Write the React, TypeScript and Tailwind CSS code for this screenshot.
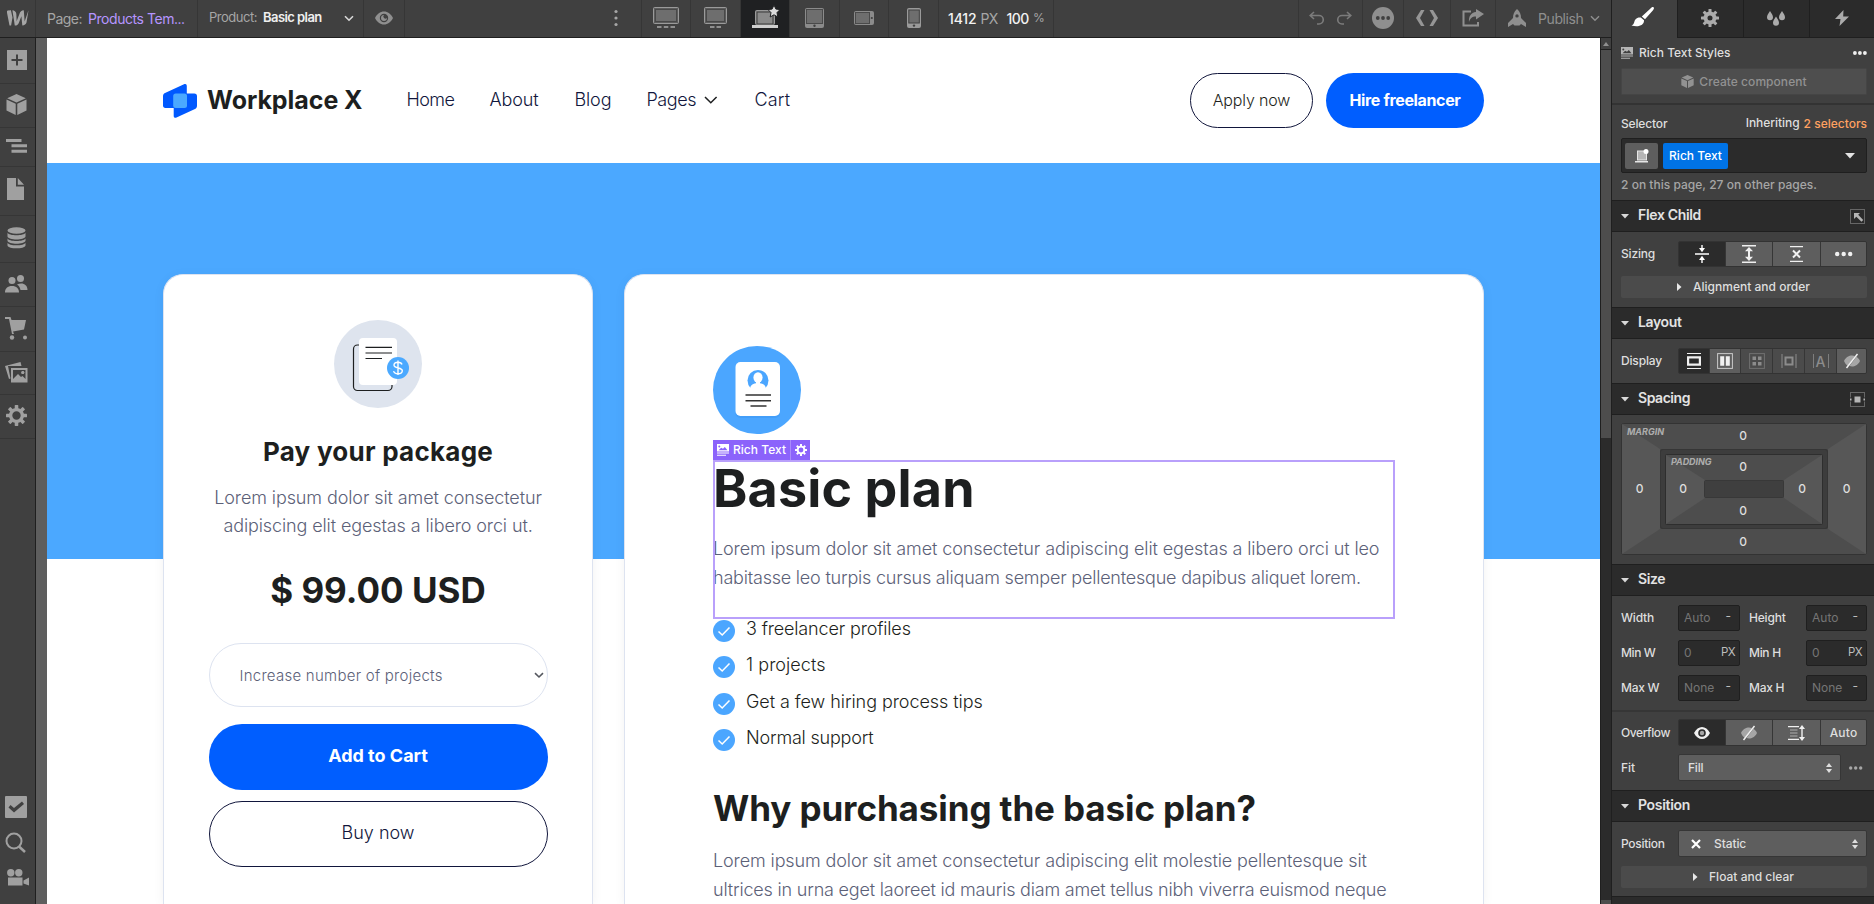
import type { ReactNode } from "react";

type IcProps = { w: number; h: number; className?: string; children: ReactNode };
const Ic = ({ w, h, className = "", children }: IcProps) => (
  <svg width={w} height={h} viewBox={`0 0 ${w} ${h}`} className={`shrink-0 ${className}`} fill="currentColor">
    {children}
  </svg>
);

/* ---------- shared glyphs ---------- */

const Gear = ({ size, className = "", hole = 3.6 }: { size: number; className?: string; hole?: number }) => (
  <svg width={size} height={size} viewBox="-10 -10 20 20" className={`shrink-0 ${className}`}>
    {[0, 45, 90, 135, 180, 225, 270, 315].map((a) => (
      <rect key={a} x={-1.7} y={-10} width={3.4} height={5} rx={0.6} fill="currentColor" transform={`rotate(${a})`} />
    ))}
    <circle r={(hole + 7.2) / 2} fill="none" stroke="currentColor" strokeWidth={7.2 - hole} />
  </svg>
);

const Cube = ({ size, className = "" }: { size: number; className?: string }) => (
  <svg width={size} height={size} viewBox="0 0 20 21" className={`shrink-0 ${className}`} fill="currentColor">
    <path d="M10 0l9.3 4.2L10 8.4.7 4.2zM0 5.600l9.200 4.200V21L0 16.600zM20 5.600l-9.200 4.200V21l9.200-4.400z" />
  </svg>
);

const Dots = ({ r = 2, gap = 6, className = "" }: { r?: number; gap?: number; className?: string }) => (
  <Ic w={gap * 2 + r * 2 + 2} h={6} className={className}>
    <circle cx={r + 1} cy={3} r={r} />
    <circle cx={r + 1 + gap} cy={3} r={r} />
    <circle cx={r + 1 + gap * 2} cy={3} r={r} />
  </Ic>
);

const RichTextGlyph = ({ className = "" }: { className?: string }) => (
  <Ic w={12} h={12} className={className}>
    <path fillRule="evenodd" d="M0 0h12v7.5H0zM1.500 6.200h9L7.800 3 6 4.800 4.200 3.800zM2.300 1.400a1 1 0 100 2 1 1 0 000-2z" />
    <path d="M0 8.500h12v1H0zM0 10.700h9v1H0z" />
  </Ic>
);

const EyeOff = () => (
  <Ic w={18} h={16}>
    <path d="M1 8c2-4 5-5.500 8-5.500 1 0 2 .2 3 .6L5 13C3.200 12 2 10.200 1 8zM13.500 3.800C15.200 4.900 16.300 6.400 17 8c-2 4-5 5.500-8 5.500-.9 0-1.700-.1-2.500-.4z" fill="#a6a6a6" />
    <path d="M3.500 15L14.500 1" stroke="#f0f0f0" strokeWidth={1.500} />
  </Ic>
);

/* ---------- top bar ---------- */

const cell = "flex h-full shrink-0 items-center justify-center border-r border-[#363636] pb-px";

const Screen = ({ w, dashes }: { w: number; dashes: number[] }) => (
  <Ic w={w} h={22}>
    <rect x={0.500} y={0.500} width={w - 1} height={16} rx={1} fill="#5c5c5c" stroke="#9a9a9a" />
    <rect x={2.500} y={2.500} width={w - 5} height={12} fill="#6e6e6e" stroke="#484848" />
    {dashes.map((x) => (
      <rect key={x} x={x} y={19} width={4.500} height={2} fill="#8f8f8f" />
    ))}
  </Ic>
);

function TopBar() {
  return (
    <div className="flex h-[38px] w-[1612px] shrink-0 items-stretch border-b border-[#1f1f1f] text-[14px] text-[#a6a6a6]">
      <div className={`${cell} w-9`}>
        <Ic w={22} h={16}>
          <path
            d="M22 .3s-3.500 10.300-3.800 11.200C18.100 10.500 17.300.3 17.300.3c-2.300 0-3.600 1.600-4.200 3.300 0 0-2.700 7.200-2.900 7.800 0-.6-.4-7.700-.4-7.700C9.600 1.500 7.600.3 5.900.3 5.900.3 8 13 8.300 15.600c2.300 0 3.600-1.500 4.200-3.200l2.400-6.100.9 9.300c2.300 0 3.600-1.400 4.200-3zM4.600 15.600L6 7.500 4.400.3C2.700.3.300 1.200 0 .3l3 15.300z"
            transform="translate(-.5 0)"
          />
        </Ic>
      </div>
      <div className={`${cell} w-[162px] !justify-start pl-[11px]`}>
        <span className="tracking-[-0.52px]">Page:</span>
        <span className="ml-[6px] tracking-[-0.45px] text-[#b695ff]">Products Tem...</span>
      </div>
      <div className={`${cell} w-[166px] !justify-start pl-[11px] text-[13px]`}>
        <span className="tracking-[-0.48px]">Product:</span>
        <span className="ml-[6px] font-semibold tracking-[-0.57px] text-[#efefef]">Basic plan</span>
        <Ic w={10} h={7} className="ml-[22px] text-[#d9d9d9]">
          <path d="M1 1.200l4 4 4-4" fill="none" stroke="currentColor" strokeWidth={1.600} />
        </Ic>
      </div>
      <div className={`${cell} w-[41px]`}>
        <Ic w={18} h={14} className="text-[#8f8f8f]">
          <path fillRule="evenodd" d="M0 7c2-4 5.200-6.500 9-6.500S16 3 18 7c-2 4-5.200 6.500-9 6.500S2 11 0 7zm9-4.200a4.200 4.200 0 104.200 4.200A4.200 4.200 0 009 2.800z" />
          <path d="M9 4a3 3 0 103 3 1.800 1.800 0 01-3-3z" fill="#8f8f8f" />
        </Ic>
      </div>
      <div className={`${cell} w-[237px] !justify-end pr-[23px]`}>
        <Ic w={4} h={18}>
          <circle cx={2} cy={2.500} r={1.600} />
          <circle cx={2} cy={9} r={1.600} />
          <circle cx={2} cy={15.500} r={1.600} />
        </Ic>
      </div>
      <div className={`${cell} w-[49px] pr-px`}>
        <Screen w={26} dashes={[4, 10.800, 17.500]} />
      </div>
      <div className={`${cell} w-[50px]`}>
        <Screen w={23} dashes={[6, 12.500]} />
      </div>
      <div className={`${cell} w-[49px] bg-[#1f2022]`}>
        <Ic w={28} h={24} className="mb-[3px] ml-[2px]">
          <rect x={3.500} y={5.500} width={19} height={14} rx={1} fill="#8b8b8b" stroke="#9a9a9a" />
          <rect x={5} y={7} width={16} height={12} fill="#8a8a8a" stroke="#3a3a3a" />
          <rect x={0} y={20} width={26} height={3} fill="#cfcfcf" />
          <path d="M22 0l1.900 4.100 4.100.5-3 3 .8 4.400-3.800-2.200-3.800 2.200.8-4.400-3-3 4.100-.5z" fill="#dcdcdc" stroke="#1f2022" strokeWidth={1} />
        </Ic>
      </div>
      <div className={`${cell} w-[50px]`}>
        <Ic w={19} h={20}>
          <rect width={19} height={20} rx={2} fill="#8b8b8b" />
          <rect x={1.500} y={1.500} width={16} height={14} fill="#6e6e6e" stroke="#4a4a4a" />
          <circle cx={9.500} cy={17.800} r={1.200} fill="#404040" />
        </Ic>
      </div>
      <div className={`${cell} w-[49px]`}>
        <Ic w={20} h={14}>
          <rect width={20} height={14} rx={2} fill="#8b8b8b" />
          <rect x={1.500} y={1.500} width={14} height={11} fill="#6e6e6e" stroke="#4a4a4a" />
          <circle cx={17.800} cy={7} r={1.100} fill="#404040" />
        </Ic>
      </div>
      <div className={`${cell} w-[50px]`}>
        <Ic w={14} h={20}>
          <rect width={14} height={20} rx={2} fill="#9a9a9a" />
          <rect x={1.800} y={2} width={10.500} height={13} fill="#6e6e6e" stroke="#404040" />
          <circle cx={7} cy={17.600} r={1.200} fill="#404040" />
        </Ic>
      </div>
      <div className={`${cell} w-[115px] !justify-start pl-[9px]`}>
        <span className="font-medium tracking-[-0.14px] text-[#f2f2f2]">1412</span>
        <span className="ml-[4px] tracking-[-0.8px]">PX</span>
        <span className="ml-[9px] font-medium tracking-[-0.46px] text-[#f2f2f2]">100</span>
        <span className="ml-[4px] text-[12px]">%</span>
      </div>
      <div className={`${cell} w-[245px]`} />
      <div className={`${cell} w-16 gap-[13px] text-[#7b7b7b]`}>
        <Ic w={15} h={15}>
          <path d="M5 1L1.200 4.500 5 8M1.500 4.500H10a4 4 0 010 8.500H8" fill="none" stroke="currentColor" strokeWidth={1.600} />
        </Ic>
        <Ic w={15} h={15}>
          <path d="M10 1l3.800 3.500L10 8M13.500 4.500H5a4 4 0 000 8.500h2" fill="none" stroke="currentColor" strokeWidth={1.600} />
        </Ic>
      </div>
      <div className={`${cell} w-[41px]`}>
        <Ic w={22} h={22}>
          <circle cx={11} cy={11} r={11} fill="#8f8f8f" />
          <g fill="#404040">
            <circle cx={5.800} cy={11} r={1.900} />
            <circle cx={11} cy={11} r={1.900} />
            <circle cx={16.200} cy={11} r={1.900} />
          </g>
        </Ic>
      </div>
      <div className={`${cell} w-[47px]`}>
        <Ic w={22} h={16} className="text-[#969696]">
          <path d="M5 0h3.500L4 8l4.500 8H5L0 8zM17 0h-3.500L18 8l-4.500 8H17l5-8z" />
        </Ic>
      </div>
      <div className={`${cell} w-[45px]`}>
        <Ic w={22} h={18} className="text-[#8f8f8f]">
          <path d="M9 2.500H1.500v14H16V13" fill="none" stroke="currentColor" strokeWidth={2} />
          <path d="M14 0l8 5-8 5.500V7.500C10 7.500 8 9.500 7 13c-.5-5.500 2-9.500 7-10z" />
        </Ic>
      </div>
      <div className="flex h-full w-[116px] items-center border-r border-[#1f1f1f] pb-px pl-[12px] text-[#8f8f8f]">
        <Ic w={18} h={18}>
          <path fillRule="evenodd" d="M9 0c3 2.500 4 5.500 4 9l5 5v4l-5-3-1.500 1.500H6.500L5 15l-5 3v-4l5-5c0-3.500 1-6.500 4-9zm0 5.200a1.700 1.700 0 100 3.400 1.700 1.700 0 000-3.400z" />
        </Ic>
        <span className="ml-[12px] tracking-[-0.39px]">Publish</span>
        <Ic w={10} h={7} className="ml-[6px]">
          <path d="M1 1.200l4 4 4-4" fill="none" stroke="currentColor" strokeWidth={1.400} />
        </Ic>
      </div>
    </div>
  );
}

/* ---------- left rail ---------- */

const railCell = "flex shrink-0 items-center border-b border-[#363636] pb-[2px] pl-[6px]";

function LeftRail() {
  return (
    <div className="flex w-9 shrink-0 flex-col border-r border-[#1f1f1f] text-[#a0a0a0]">
      <div className={`${railCell} h-[46px]`}>
        <Ic w={20} h={20} className="ml-px">
          <path fillRule="evenodd" d="M0 0h20v20H0zM9 4.500V9H4.500v2H9v4.500h2V11h4.500V9H11V4.500z" />
        </Ic>
      </div>
      <div className={`${railCell} h-[44px]`}>
        <Cube size={21} />
      </div>
      <div className={`${railCell} h-[39px]`}>
        <Ic w={21} h={14}>
          <path d="M0 0h15.500v3H0zM5.500 5.300H21v3H5.500zM5.500 10.800H21v3H5.500z" />
        </Ic>
      </div>
      <div className={`${railCell} h-[49px] !pb-1`}>
        <Ic w={17} h={22} className="ml-px">
          <path d="M0 0h9v8.500h8V22H0zM10.800 0L17 6.800h-6.200z" />
        </Ic>
      </div>
      <div className={`${railCell} h-[47px]`}>
        <Ic w={19} h={22} className="ml-px">
          <ellipse cx={9.500} cy={3.500} rx={9} ry={3.200} />
          <path d="M.5 5.500c1 3.700 17 3.700 18 0v4c-1 3.900-17 3.900-18 0zM.5 11.200c1 3.700 17 3.700 18 0V13.700c-1 3.900-17 3.900-18 0zM.5 15.400c1 3.900 17 3.900 18 0v3c-1 3.900-17 3.900-18 0z" />
        </Ic>
      </div>
      <div className={`${railCell} h-[44px] !pl-[5px]`}>
        <Ic w={23} h={18}>
          <circle cx={7} cy={5.500} r={3.500} />
          <circle cx={15.500} cy={3.500} r={3.500} />
          <path d="M0 17.500c0-4 2.500-6.500 7-6.500s7 2.500 7 6.500zM12 9.500c5-2.500 10.500-.500 10.500 5.500h-7c-.5-2.500-1.500-4.200-3.500-5.500z" />
        </Ic>
      </div>
      <div className={`${railCell} h-[45px] !pl-[5px]`}>
        <Ic w={22} h={23}>
          <path d="M0 0h5.500l1 3H21l-2 9.500L8 14.500l1 2.500H7L4 2H0z" />
          <circle cx={7} cy={20.500} r={2.200} />
          <circle cx={20} cy={20.500} r={2} />
        </Ic>
      </div>
      <div className={`${railCell} h-[43px] !pl-[5px]`}>
        <Ic w={23} h={21}>
          <path d="M0 4L15.500 0l1 4H3l2.500 12.500L4 17z" />
          <path fillRule="evenodd" d="M6 6h16.500v14.500H6zM8 8v9l5-5 3 3 1.500-1 3 3V8zM17.800 9a1.500 1.500 0 100 3 1.500 1.500 0 000-3z" />
          <circle cx={17.800} cy={10.500} r={1.500} />
        </Ic>
      </div>
      <div className={`${railCell} h-[44px]`}>
        <Gear size={21} hole={4} />
      </div>
      <div className="mt-auto flex flex-col items-start pb-[18px] pl-[5px]">
        <Ic w={22} h={22}>
          <path fillRule="evenodd" d="M1 0h20a1 1 0 011 1v20a1 1 0 01-1 1H1a1 1 0 01-1-1V1a1 1 0 011-1zM3.500 11.500L9 16.500l10-8.500-2-2.500L9 12 5.500 9z" />
        </Ic>
        <Ic w={22} h={22} className="mt-[14px]">
          <circle cx={9} cy={9} r={7.500} fill="none" stroke="currentColor" strokeWidth={2} />
          <path d="M14 14.500l6 5.500" stroke="currentColor" strokeWidth={2.500} />
        </Ic>
        <Ic w={22} h={17} className="ml-[2px] mt-[15px]">
          <circle cx={3.800} cy={3.800} r={3.700} />
          <circle cx={11.800} cy={3.800} r={3.700} />
          <path d="M1 8.500h14.500v8H1zM16.500 11.500L22 8.500v8l-5.500-2z" />
        </Ic>
      </div>
    </div>
  );
}

/* ---------- site being edited ---------- */

function SiteHeader() {
  return (
    <div className="flex h-[125px] shrink-0 items-center bg-white pl-[116px] pr-[116px] text-[18px] font-[350] text-[#11163c]">
      <Ic w={34} h={34}>
        <path d="M21 .3c1.500-.8 2.800 0 2.800 1.700V9.500h7.500c1.800 0 2.700 1 2.700 2.700v9.500c0 1.500-.7 2.600-2 3.300l-18.500 8.500c-1.500.8-2.800 0-2.800-1.500v-8H2.500C.8 24 0 23 0 21.500V12.300c0-1.500.7-2.500 2-3.200z" fill="#0059ff" />
        <rect x={10.200} y={9.500} width={13.800} height={14.500} rx={2.500} fill="#4ba9ff" />
      </Ic>
      <span className="ml-[10px] text-[25px] font-bold tracking-[-0.06px] text-[#1d1f20]">Workplace X</span>
      <nav className="ml-[44px] flex items-center whitespace-nowrap pb-[2px]">
        <span className="w-[83px] tracking-[-0.55px]">Home</span>
        <span className="w-[85px] tracking-[-0.12px]">About</span>
        <span className="w-[72px] tracking-[-0.12px]">Blog</span>
        <span className="w-[58px] tracking-[-0.4px]">Pages</span>
        <Ic w={14} h={8}>
          <path d="M1 1l5.800 5.800L12.600 1" fill="none" stroke="#1d1f20" strokeWidth={1.500} />
        </Ic>
        <span className="ml-[36px] tracking-[0.2px]">Cart</span>
      </nav>
      <div className="ml-auto flex gap-[13px] text-[16px]">
        <div className="flex h-[55px] w-[123px] items-center justify-center rounded-full border border-[#11163c] pb-[2px] tracking-[-0.15px] text-[#1d1f20]">
          Apply now
        </div>
        <div className="flex h-[55px] w-[158px] items-center justify-center rounded-full bg-[#005eff] pb-[2px] font-bold tracking-[-0.36px] text-white">
          Hire freelancer
        </div>
      </div>
    </div>
  );
}

function PackageCard() {
  return (
    <div className="flex w-[430px] flex-col items-center rounded-t-[20px] border border-b-0 border-[#dde3f0] bg-white pt-[45px] shadow-[0_2px_12px_rgba(20,20,43,0.05)]">
      <Ic w={88} h={88}>
        <circle cx={44} cy={44} r={44} fill="#dee4ee" />
        <rect x={19.500} y={25} width={38.500} height={45.500} rx={4} fill="none" stroke="#1d1f20" strokeWidth={1.200} />
        <rect x={25} y={18} width={38} height={47} rx={4} fill="#fff" />
        <path d="M31.500 27.300H58M31.500 33H58M31.500 38.500H48" stroke="#1d1f20" strokeWidth={1.200} />
        <circle cx={64} cy={48} r={11} fill="#4ba9ff" />
        <path d="M68 44.500c-.5-1.500-2-2.300-4-2.300-2.300 0-4 1-4 2.800 0 4 8.300 2 8.300 5.800 0 2-1.800 3-4.300 3-2.300 0-4-.9-4.400-2.600M64 40.500v14.500" fill="none" stroke="#fff" strokeWidth={1.400} />
      </Ic>
      <h2 className="mt-6 text-[26px] font-[650] leading-10 tracking-[0.25px] text-[#1d1f20]">Pay your package</h2>
      <p className="mt-3 text-center text-[18px] font-[350] leading-7 text-[#5c6178]">
        <span className="block tracking-[-0.1px]">Lorem ipsum dolor sit amet consectetur</span>
        <span className="block tracking-[-0.11px]">adipiscing elit egestas a libero orci ut.</span>
      </p>
      <div className="mt-[26px] text-[35px] font-[650] leading-[48px] text-[#1d1f20]">$ 99.00 USD</div>
      <div className="mt-[29px] flex h-16 w-[339px] items-center rounded-full border border-[#dde3f0] pl-[30px] pr-[3px] text-[15px] font-[350] text-[#5c6178]">
        <span className="mt-[3px] tracking-[0.26px]">Increase number of projects</span>
        <Ic w={10} h={7} className="ml-auto">
          <path d="M1 1.200l4 3.800 4-3.800" fill="none" stroke="#55585f" strokeWidth={1.600} />
        </Ic>
      </div>
      <div className="mt-[17px] flex h-[66px] w-[339px] items-center justify-center rounded-full bg-[#005eff] pb-[4px] text-[18px] font-bold text-white">
        Add to Cart
      </div>
      <div className="mt-[11px] flex h-[66px] w-[339px] items-center justify-center rounded-full border border-[#11163c] pb-[4px] text-[18px] font-[350] text-[#11163c]">
        Buy now
      </div>
    </div>
  );
}

const features: [string, string][] = [
  ["3 freelancer profiles", "tracking-[-0.15px]"],
  ["1 projects", "tracking-[0.05px]"],
  ["Get a few hiring process tips", "tracking-[-0.06px]"],
  ["Normal support", "tracking-[-0.2px]"],
];

function PlanCard() {
  return (
    <div className="flex w-[860px] flex-col whitespace-nowrap rounded-t-[20px] border border-b-0 border-[#dde3f0] bg-white pl-[88px] pr-[88px] pt-[71px] text-[#1d1f20] shadow-[0_2px_12px_rgba(20,20,43,0.05)]">
      <Ic w={88} h={88}>
        <circle cx={44} cy={44} r={44} fill="#4ba6ff" />
        <rect x={22.500} y={18} width={44.500} height={54} rx={5} fill="#3d9af5" opacity={0.6} />
        <rect x={22.500} y={16} width={44.500} height={54} rx={5} fill="#fff" />
        <circle cx={45} cy={34.500} r={10.500} fill="#4ba6ff" />
        <ellipse cx={45} cy={31.500} rx={4.600} ry={5.200} fill="#fff" />
        <path d="M43 35h4v2.200c4 .8 6 2.300 6 6.300l-3 3H40l-3-3c0-4 2-5.500 6-6.300z" fill="#fff" />
        <path d="M32.500 49H58M32.500 54.700H58M37.500 60H53.500" stroke="#333" strokeWidth={1.600} />
      </Ic>
      <div className="relative mt-[26px] h-[159px] outline-2 -outline-offset-2 outline-[#b9a0fb]">
        <div className="absolute -top-[20px] left-0 flex h-5 items-center bg-[#8b63fb] text-[12px] font-medium text-white">
          <RichTextGlyph className="ml-[4px]" />
          <span className="ml-[4px] pb-px tracking-[0.02px]">Rich Text</span>
          <div className="ml-[4px] flex h-5 w-[20px] items-center justify-center border-l border-[#a98bfc]">
            <Gear size={12} hole={4} />
          </div>
        </div>
        <h1 className="text-[52px] font-[650] leading-[58px] tracking-[0.15px]">Basic plan</h1>
        <p className="mt-4 text-[18px] font-[350] leading-[29px] text-[#5c6178]">
          <span className="block tracking-[-0.11px]">
            Lorem ipsum dolor sit amet consectetur adipiscing elit egestas a libero orci ut leo
          </span>
          <span className="block tracking-[-0.21px]">
            habitasse leo turpis cursus aliquam semper pellentesque dapibus aliquet lorem.
          </span>
        </p>
      </div>
      <ul className="mt-px flex flex-col gap-[14.400px] text-[18px] font-[350]">
        {features.map(([t, c]) => (
          <li key={t} className="flex h-[22px] items-start">
            <Ic w={22} h={22}>
              <circle cx={11} cy={11} r={11} fill="#4ba6ff" />
              <path d="M5.500 11.500l3.700 3.500L16.500 7.500" fill="none" stroke="#fff" strokeWidth={1.500} />
            </Ic>
            <span className={`ml-[11px] leading-[18px] ${c}`}>{t}</span>
          </li>
        ))}
      </ul>
      <h2 className="mt-[33px] text-[35px] font-[650] leading-[48px] tracking-[-0.1px]">
        Why purchasing the basic plan?
      </h2>
      <p className="mt-[14px] text-[18px] font-[350] leading-[29px] text-[#5c6178]">
        <span className="block tracking-[-0.11px]">
          Lorem ipsum dolor sit amet consectetur adipiscing elit molestie pellentesque sit
        </span>
        <span className="block tracking-[-0.19px]">
          ultrices in urna eget laoreet id mauris diam amet tellus nibh viverra euismod neque
        </span>
      </p>
    </div>
  );
}

function Canvas() {
  return (
    <div className="flex w-[1553px] shrink-0 flex-col overflow-hidden bg-white">
      <SiteHeader />
      <div className="flex flex-1 justify-center gap-[31px] bg-[linear-gradient(#4ba8ff_0,#4ba8ff_396px,#ffffff_396px)] pt-[111px]">
        <PackageCard />
        <PlanCard />
      </div>
    </div>
  );
}

function Scrollbar() {
  return (
    <div className="flex w-3 shrink-0 flex-col border-l border-r border-[#1f1f1f] bg-[#2b2b2b]">
      <div className="flex h-3 items-center justify-center border-b border-[#1f1f1f] bg-[#404040]">
        <Ic w={6} h={4}>
          <path d="M0 4l3-4 3 4z" fill="#8f8f8f" />
        </Ic>
      </div>
      <div className="h-[388px] bg-[#4d4d4d]" />
      <div className="mt-auto h-1 bg-[#4d4d4d]" />
    </div>
  );
}

/* ---------- style panel ---------- */

const Section = ({ title, track, children }: { title: string; track: string; children?: ReactNode }) => (
  <div className="flex h-8 shrink-0 items-center border-b border-t border-[#1f1f1f] bg-[#2b2b2b] pl-[9px] pr-[9px]">
    <Ic w={8} h={5} className="text-[#d9d9d9]">
      <path d="M0 0h8L4 4.500z" />
    </Ic>
    <span className={`ml-[9px] pb-[3px] text-[14px] font-semibold text-[#e3e3e3] ${track}`}>{title}</span>
    <div className="ml-auto">{children}</div>
  </div>
);

const Fold = ({ text, w }: { text: string; w: string }) => (
  <div className="flex h-[22px] items-center justify-center rounded-[2px] bg-[#4b4b4b]">
    <Ic w={5} h={8} className="text-[#e8e8e8]">
      <path d="M0 0v8l4.500-4z" />
    </Ic>
    <span className={`ml-[11px] pb-px pr-px ${w}`}>{text}</span>
  </div>
);

const Seg = ({ children, on, dim, last, w }: { children: ReactNode; on?: boolean; dim?: boolean; last?: boolean; w: string }) => (
  <div
    className={`flex h-full shrink-0 items-center justify-center ${w} ${last ? "" : "border-r border-[#363636]"} ${
      on ? "bg-[#2b2b2b]" : dim ? "bg-[#4b4b4b]" : "bg-[#5e5e5e]"
    }`}
  >
    {children}
  </div>
);

const Field = ({ value, unit }: { value: string; unit: string }) => (
  <div className="flex h-[26px] items-center justify-between rounded-[2px] border border-[#1f1f1f] bg-[#2b2b2b] pl-[5px] pr-[4px]">
    <span className="text-[#757575]">{value}</span>
    {unit === "-" ? (
      <span className="pb-1 pr-[4px] text-[#bdbdbd]">-</span>
    ) : (
      <span className="pb-px text-[11.500px] tracking-[-0.6px] text-[#bdbdbd]">{unit}</span>
    )}
  </div>
);

const UpDown = ({ className = "" }: { className?: string }) => (
  <Ic w={6} h={10} className={className}>
    <path d="M0 4l3-4 3 4zM0 6l3 4 3-4z" />
  </Ic>
);

const Num = ({ className = "" }: { className?: string }) => (
  <span className={`flex items-center justify-center ${className}`}>0</span>
);

function SpacingBox() {
  return (
    <div className="relative h-[132px] text-[12px] font-medium text-[#dedede]">
      <svg className="absolute inset-0" width={246} height={132} viewBox="0 0 246 132">
        <rect x={0.500} y={0.500} width={245} height={131} rx={2} fill="#4d4d4d" stroke="#333" />
        <path d="M1 1l38 25v80L1 131zM245 1l-38 25v80l38 25z" fill="#575757" />
        <rect x={39} y={26} width={168} height={80} rx={2} fill="#363636" />
        <rect x={40} y={27} width={166} height={78} rx={2} fill="#3d3d3d" />
        <rect x={44.500} y={31.500} width={157} height={70} rx={1} fill="#4d4d4d" stroke="#2e2e2e" />
        <path d="M45 32l39 25v18l-39 26zM201 32l-38 25v18l38 26z" fill="#575757" />
        <rect x={83.500} y={57.500} width={79} height={17} rx={1} fill="#3f3f3f" stroke="#383838" />
      </svg>
      <div className="relative -ml-px grid h-full w-[246px] grid-cols-[39px_1fr_39px] grid-rows-[26px_1fr_26px]">
        <span className="pl-[7px] pt-[1px] text-[9px] font-bold italic leading-4 tracking-[-0.03px] text-[#adadad]">MARGIN</span>
        <Num />
        <span />
        <Num className="pb-px" />
        <div className="grid grid-cols-[44px_1fr_44px] grid-rows-[31px_18px_31px]">
          <span className="pl-[12px] pt-[5px] text-[9px] font-bold italic leading-4 tracking-[-0.06px] text-[#adadad]">PADDING</span>
          <Num className="pt-[5px]" />
          <span />
          <Num className="pl-[4px]" />
          <span />
          <Num className="pr-[6px]" />
          <span />
          <Num className="pb-[5px]" />
          <span />
        </div>
        <Num className="pb-px" />
        <span />
        <Num />
        <span />
      </div>
    </div>
  );
}

const label = "w-[57px] shrink-0 whitespace-nowrap";
const segs = "flex h-[26px] w-[189px] overflow-hidden rounded-[2px] border border-[#333]";

function StylePanel() {
  return (
    <div className="flex w-[262px] shrink-0 flex-col whitespace-nowrap text-[12px] font-[450] text-[#dedede]">
      <div className="flex h-[38px] shrink-0">
        <div className="flex w-[65px] items-center justify-center pb-[4px] pr-[4px]">
          <Ic w={23} h={20} className="text-white">
            <path d="M22.500.3c1 .8.300 2-.7 3.300L14 12.300 10.800 9.500 19.500 1.400c1-.9 2.200-1.700 3-1.100zM9.800 10.500l3.200 2.800c.3 4-4.500 7.500-12.500 5.200 3-1 2.300-3.700 3.700-5.800 1.400-2 3.800-2.500 5.600-2.200z" />
          </Ic>
        </div>
        <div className="flex w-[66px] items-center justify-center border-b border-l border-[#1f1f1f] bg-[#2b2b2b] pb-px pr-[2px] text-[#ababab]">
          <Gear size={18} hole={2.800} />
        </div>
        <div className="flex w-[66px] items-center justify-center border-b border-l border-[#1f1f1f] bg-[#2b2b2b] pb-px pr-[2px] text-[#ababab]">
          <Ic w={18} h={15}>
            <path d="M3 0c1.500 2.600 3 4.300 3 6.300a3 3 0 01-6 0C0 4.300 1.500 2.600 3 0zM15 0c1.500 2.600 3 4.300 3 6.300a3 3 0 01-6 0c0-2 1.500-3.700 3-6.300zM9 5.500c1.500 2.600 3 4.300 3 6.300a3 3 0 01-6 0c0-2 1.500-3.700 3-6.300z" />
          </Ic>
        </div>
        <div className="flex w-[65px] items-center justify-center border-b border-l border-[#1f1f1f] bg-[#2b2b2b] pb-[2px] text-[#ababab]">
          <Ic w={14} h={16}>
            <path d="M8.500 0L0 9h5.500l-1 7L14 6.500H8.200z" />
          </Ic>
        </div>
      </div>

      <div className="flex h-[65px] shrink-0 flex-col pl-[9px] pr-[6px]">
        <div className="flex h-[30px] items-center">
          <RichTextGlyph className="text-[#b5b5b5]" />
          <span className="ml-[6px]">Rich Text Styles</span>
          <Dots r={1.900} gap={5} className="ml-auto text-[#efefef]" />
        </div>
        <div className="mr-px flex h-[27px] items-center justify-center rounded-[1px] border border-[#454545] bg-[#4e4e4e] text-[#929292]">
          <Cube size={13} />
          <span className="ml-[5px] tracking-[0.05px]">Create component</span>
        </div>
      </div>
      <div className="flex h-[98px] shrink-0 flex-col border-t-2 border-[#333] pl-[9px] pr-[7px] pt-[9px]">
        <div className="flex h-[19px] items-center">
          <span className="tracking-[-0.15px]">Selector</span>
          <span className="ml-auto pb-px tracking-[-0.05px]">Inheriting</span>
          <span className="ml-[4px] text-[#ffa160]">2 selectors</span>
        </div>
        <div className="mt-[5px] flex h-[35px] shrink-0 items-center rounded-[2px] border border-[#1f1f1f] bg-[#2b2b2b] pl-[3px]">
          <div className="flex h-[26px] w-[33px] items-center justify-center rounded-[2px] bg-[#5e5e5e]">
            <Ic w={14} h={14}>
              <rect x={2.500} y={2} width={9} height={9} fill="#b5b5b5" stroke="#e6e6e6" />
              <path d="M0 12h13v1.500H0z" fill="#e6e6e6" />
              <circle cx={11} cy={2.500} r={2.500} fill="#fff" />
            </Ic>
          </div>
          <div className="ml-[5px] flex h-[26px] w-[65px] items-center justify-center rounded-[2px] bg-[#0073e6] font-medium text-white">Rich Text</div>
          <Ic w={10} h={6} className="ml-auto mr-[11px] text-[#e3e3e3]">
            <path d="M0 0h10L5 5.500z" />
          </Ic>
        </div>
        <span className="mt-[3px] leading-[18px] tracking-[0.02px] text-[#a6a6a6]">2 on this page, 27 on other pages.</span>
      </div>

      <div className="-mt-px">
        <Section title="Flex Child" track="tracking-[-0.33px]">
          <Ic w={15} h={15}>
            <rect x={0.500} y={0.500} width={14} height={14} fill="none" stroke="#666" />
            <path d="M4 4h6L8.200 5.800l5 5.200-1.700 1.700-5.200-5L4 10z" fill="#b5b5b5" />
          </Ic>
        </Section>
      </div>
      <div className="flex h-[75px] shrink-0 flex-col pl-[9px] pr-[7px] pt-[9px]">
        <div className="flex items-center">
          <span className={`${label} tracking-[-0.2px]`}>Sizing</span>
          <div className={segs}>
            <Seg on w="w-[47px]">
              <Ic w={14} h={18} className="text-white">
                <path d="M0 8.300h14v1.400H0zM6.300 0h1.400v3H10L7 7.300 4 3h2.300zM6.300 18h1.400v-3H10l-3-4.300L4 15h2.300z" />
              </Ic>
            </Seg>
            <Seg w="w-[47px]">
              <Ic w={14} h={18} className="text-[#f0f0f0]">
                <path d="M0 0h14v1.400H0zM0 16.600h14V18H0zM7 2l4 4.200H8v5.600h3L7 16l-4-4.200h3V6.200H3z" />
              </Ic>
            </Seg>
            <Seg w="w-[48px]">
              <Ic w={13} h={16} className="text-[#f0f0f0]">
                <path d="M0 0h13v1.200H0zM0 14.800h13V16H0z" />
                <path d="M3 4.500l7 7M10 4.500l-7 7" stroke="currentColor" strokeWidth={2} />
              </Ic>
            </Seg>
            <Seg last w="w-[45px]">
              <Dots r={2.200} gap={6.500} className="text-[#f0f0f0]" />
            </Seg>
          </div>
        </div>
        <div className="mt-[9px]">
          <Fold text="Alignment and order" w="tracking-[0.01px]" />
        </div>
      </div>

      <Section title="Layout" track="tracking-[-0.38px]" />
      <div className="flex h-[44px] shrink-0 items-center pl-[9px] pr-[7px]">
        <span className={`${label} tracking-[-0.17px]`}>Display</span>
        <div className={segs}>
          <Seg on w="w-[31px]">
            <Ic w={14} h={16} className="text-[#f0f0f0]">
              <path fillRule="evenodd" d="M0 0h14v1H0zM0 15h14v1H0zM0 3.200h14v9.600H0zM2.200 5.400v5.200h9.600V5.400z" />
            </Ic>
          </Seg>
          <Seg w="w-[31px]">
            <Ic w={16} h={16} className="text-[#f0f0f0]">
              <rect x={0.600} y={0.600} width={14.800} height={14.800} fill="none" stroke="#c9c9c9" />
              <path d="M3.200 3.200h4v9.600h-4zM8.800 3.200h4v9.600h-4z" />
            </Ic>
          </Seg>
          <Seg dim w="w-[32px]">
            <Ic w={16} h={16} className="text-[#8c8c8c]">
              <rect x={0.600} y={0.600} width={14.800} height={14.800} fill="none" stroke="#707070" />
              <path d="M3.500 3.500H7V7H3.500zM9 3.500h3.500V7H9zM3.500 9H7v3.500H3.500zM9 9h3.500v3.500H9z" />
            </Ic>
          </Seg>
          <Seg dim w="w-[32px]">
            <Ic w={16} h={14} className="text-[#8c8c8c]">
              <path fillRule="evenodd" d="M.5 0h1v14h-1zM14.500 0h1v14h-1zM3.500 2.500h9v9h-9zM5.500 4.500v5h5v-5z" />
            </Ic>
          </Seg>
          <Seg dim w="w-[32px]">
            <div className="flex h-[14px] w-4 items-center justify-center border-x border-[#7d7d7d] text-[14px] text-[#8c8c8c]">A</div>
          </Seg>
          <Seg last w="w-[29px]">
            <EyeOff />
          </Seg>
        </div>
      </div>

      <Section title="Spacing" track="tracking-[-0.45px]">
        <Ic w={15} h={15}>
          <rect x={0.500} y={0.500} width={14} height={14} fill="none" stroke="#666" />
          <path d="M0 5.500h1v4H0zM14 5.500h1v4h-1z" fill="#2b2b2b" />
          <path d="M4.500 4.500h6v6h-6z" fill="#b5b5b5" />
          <path d="M0 6.500h1.500v2H0zM13.500 6.500H15v2h-1.500z" fill="#b5b5b5" />
        </Ic>
      </Section>
      <div className="h-[149px] shrink-0 pl-[9px] pr-[7px] pt-2">
        <SpacingBox />
      </div>

      <Section title="Size" track="tracking-[-0.4px]" />
      <div className="grid h-[114px] shrink-0 grid-cols-[57px_62px_66px_61px] grid-rows-[26px_26px_26px] items-center gap-y-[9px] pl-[9px] pt-[9px] font-medium">
        <span className="tracking-[-0.19px]">Width</span>
        <div className="font-normal"><Field value="Auto" unit="-" /></div>
        <span className="pl-[9px] tracking-[-0.2px]">Height</span>
        <div className="font-normal"><Field value="Auto" unit="-" /></div>
        <span className="tracking-[-0.39px]">Min W</span>
        <div className="font-normal"><Field value="0" unit="PX" /></div>
        <span className="pl-[9px] tracking-[-0.3px]">Min H</span>
        <div className="font-normal"><Field value="0" unit="PX" /></div>
        <span className="tracking-[-0.3px]">Max W</span>
        <div className="font-normal"><Field value="None" unit="-" /></div>
        <span className="pl-[9px] tracking-[-0.3px]">Max H</span>
        <div className="font-normal"><Field value="None" unit="-" /></div>
      </div>
      <div className="flex h-[80px] shrink-0 flex-col border-t-2 border-[#363636] pl-[9px] pt-[7px]">
        <div className="flex items-center">
          <span className={`${label} tracking-[-0.42px]`}>Overflow</span>
          <div className={`${segs} !h-[27px]`}>
            <Seg on w="w-[47px]">
              <Ic w={16} h={12} className="text-[#f0f0f0]">
                <path fillRule="evenodd" d="M0 6c2-4 5-6 8-6s6 2 8 6c-2 4-5 6-8 6S2 10 0 6zm8-3.800a3.800 3.800 0 100 7.600 3.800 3.800 0 000-7.600z" />
                <circle cx={8} cy={6} r={2.200} fill="#a6a6a6" />
              </Ic>
            </Seg>
            <Seg w="w-[47px]">
              <EyeOff />
            </Seg>
            <Seg w="w-[48px]">
              <Ic w={17} h={16} className="text-[#f0f0f0]">
                <path d="M0 1h11v1.300H0zM0 13.700h11V15H0zM13.300 4v8H11l3 4 3-4h-2.300V4H17l-3-4-3 4z" />
                <path d="M2 4.500h7.500v1H2zM2 7.500h7.500v1H2zM2 10.500h7.500v1H2z" fill="#b0b0b0" />
              </Ic>
            </Seg>
            <Seg last w="w-[45px]">
              <span className="tracking-[0.2px]">Auto</span>
            </Seg>
          </div>
        </div>
        <div className="mt-[8px] flex items-center">
          <span className={label}>Fit</span>
          <div className="flex h-[27px] w-[163px] items-center justify-between rounded-[2px] border border-[#363636] bg-[#5e5e5e] pl-[9px] pr-[8px] tracking-[-0.2px]">
            Fill
            <UpDown />
          </div>
          <Dots r={1.700} gap={5} className="ml-[7px] text-[#a6a6a6]" />
        </div>
      </div>

      <Section title="Position" track="tracking-[-0.31px]" />
      <div className="flex h-[74px] shrink-0 flex-col pl-[9px] pr-[7px] pt-2">
        <div className="flex items-center">
          <span className={`${label} tracking-[-0.28px]`}>Position</span>
          <div className="flex h-[27px] w-[189px] items-center rounded-[2px] border border-[#363636] bg-[#5e5e5e] pl-[12px] pr-[8px]">
            <Ic w={10} h={10} className="text-white">
              <path d="M1 1l8 8M9 1L1 9" stroke="currentColor" strokeWidth={2.200} />
            </Ic>
            <span className="ml-[13px] tracking-[-0.1px]">Static</span>
            <UpDown className="ml-auto" />
          </div>
        </div>
        <div className="mt-[9px]">
          <Fold text="Float and clear" w="tracking-[0.01px]" />
        </div>
      </div>
      <div className="flex-1 border-t border-[#1f1f1f] bg-[#2b2b2b]" />
    </div>
  );
}

export default function App() {
  return (
    <div className="flex h-[904px] w-[1874px] overflow-hidden bg-[#404040] font-[Inter,sans-serif]">
      <div className="flex w-[1612px] shrink-0 flex-col">
        <TopBar />
        <div className="flex min-h-0 flex-1 bg-[#404040]">
          <LeftRail />
          <div className="w-[11px] shrink-0 bg-[#5e5e5e]" />
          <Canvas />
          <Scrollbar />
        </div>
      </div>
      <StylePanel />
    </div>
  );
}
